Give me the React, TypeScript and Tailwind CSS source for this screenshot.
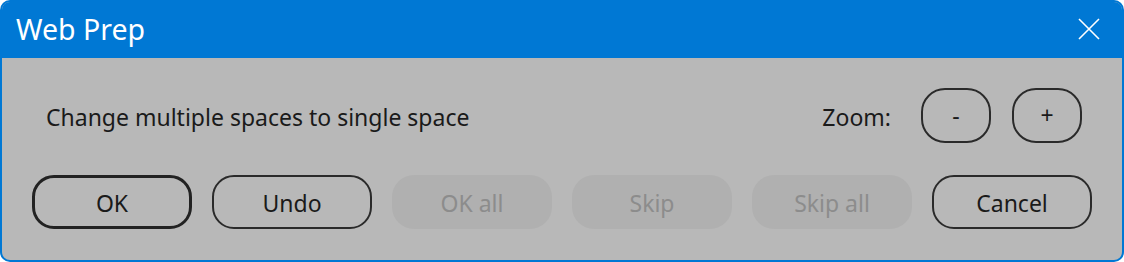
import React from "react";

const font = { fontFamily: '"Noto Sans", "Open Sans", sans-serif' };

function Btn({ label, variant }: { label: string; variant: "default" | "normal" | "disabled" }) {
  const base =
    "w-[160px] h-[54px] rounded-[22px] flex items-center justify-center text-[23px] leading-none";
  const cls =
    variant === "default"
      ? "border-[3px] border-[#222222] text-[#1a1a1a]"
      : variant === "normal"
      ? "border-2 border-[#2a2a2a] text-[#1a1a1a]"
      : "bg-[#b0b0b0] text-[#8c8c8c]";
  return (
    <div className={`${base} ${cls}`}>
      <span className="pt-[3px]">{label}</span>
    </div>
  );
}

export default function App() {
  return (
    <div
      className="w-[1124px] h-[262px] rounded-[10px] border-2 border-[#0078d4] overflow-hidden flex flex-col bg-[#b8b8b8]"
      style={font}
    >
      <div className="h-[56px] shrink-0 bg-[#0078d4] flex items-center justify-between pl-[14px] pr-[22px]">
        <span className="text-white text-[28.5px] leading-none pb-[2px]">Web Prep</span>
        <svg width="22" height="22" viewBox="0 0 22 22" className="mt-[-2px]">
          <path d="M1 1 L21 21 M21 1 L1 21" stroke="white" strokeWidth="1.6" fill="none" />
        </svg>
      </div>
      <div className="flex-1 flex flex-col pt-[30px]">
        <div className="flex items-center h-[55px] pl-[44px] pr-[40px]">
          <span className="text-[23px] text-[#1a1a1a] flex-1 pt-[4px]">
            Change multiple spaces to single space
          </span>
          <span className="text-[23px] text-[#1a1a1a] mr-[30px] pt-[4px]">Zoom:</span>
          <div className="w-[70px] h-[55px] rounded-[24px] border-2 border-[#2a2a2a] flex items-center justify-center text-[23px] text-[#1a1a1a]">
            -
          </div>
          <div className="w-[70px] h-[55px] rounded-[24px] border-2 border-[#2a2a2a] flex items-center justify-center text-[23px] text-[#1a1a1a] ml-[21px]">
            +
          </div>
        </div>
        <div className="flex gap-[20px] pl-[30px] mt-[32px]">
          <Btn label="OK" variant="default" />
          <Btn label="Undo" variant="normal" />
          <Btn label="OK all" variant="disabled" />
          <Btn label="Skip" variant="disabled" />
          <Btn label="Skip all" variant="disabled" />
          <Btn label="Cancel" variant="normal" />
        </div>
      </div>
    </div>
  );
}
